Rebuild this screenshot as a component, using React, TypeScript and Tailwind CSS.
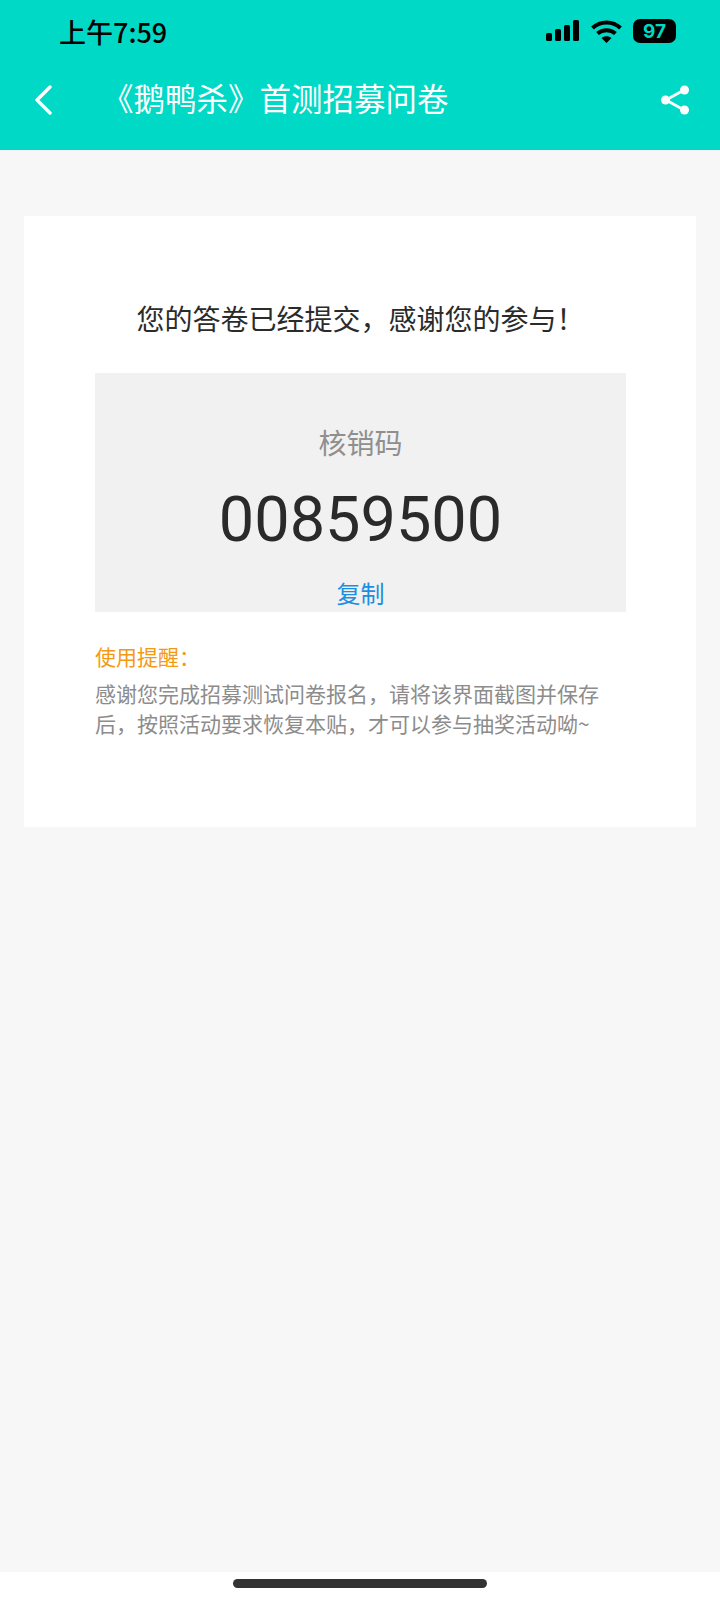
const cjk = "font-['Noto_Sans_CJK_SC','Noto_Sans',sans-serif]"

function StatusIcons() {
  return (
    <div className="flex items-center gap-[11px]">
      <svg width="34" height="22" viewBox="0 0 34 22" fill="#000">
        <rect x="0" y="13" width="6" height="8" rx="1.5" />
        <rect x="9" y="9" width="6" height="12" rx="1.5" />
        <rect x="18" y="5" width="6" height="16" rx="1.5" />
        <rect x="27" y="0" width="6" height="21" rx="1.5" />
      </svg>
      <svg width="31" height="23" viewBox="0 0 31 23" fill="none" stroke="#000" strokeWidth="4">
        <path d="M1.5 8C9.5 .5 21.5 .5 29.5 8" />
        <path d="M6.5 13.5C11.5 9 19.5 9 24.5 13.5" />
        <path d="M10.5 18 15.5 23 20.5 18C17.5 15.5 13.5 15.5 10.5 18Z" fill="#000" stroke="none" />
      </svg>
      <div className="relative flex h-[24px] w-[43px] items-center justify-center rounded-[7px] bg-black font-['Inter',sans-serif] text-[19px] leading-none font-bold text-[#00d9c6]">
        97
      </div>
    </div>
  )
}

function TopBar() {
  return (
    <header className="h-[150px] shrink-0 bg-[#00d9c6]">
      <div className="flex h-[62px] items-center justify-between pr-[44px] pl-[59px]">
        <span className={`${cjk} text-[27px] leading-none font-medium text-black`}>上午7:59</span>
        <StatusIcons />
      </div>
      <div className="flex h-[76px] items-center pr-[30px] pl-[34px]">
        <svg width="18" height="30" viewBox="0 0 18 30" fill="none" stroke="#fff" strokeWidth="3.4" strokeLinecap="round" strokeLinejoin="round" className="shrink-0">
          <path d="M16 2 3 15 16 28" />
        </svg>
        <h1 className={`${cjk} ml-[50px] flex-1 pb-[5px] text-[31.5px] leading-none font-normal text-white`}>《鹅鸭杀》首测招募问卷</h1>
        <svg width="30" height="30" viewBox="0 0 30 30" fill="#fff" stroke="#fff" className="shrink-0">
          <path d="M6 15 24 5M6 15 24 25" strokeWidth="2.6" fill="none" />
          <circle cx="5.5" cy="15" r="4.5" stroke="none" />
          <circle cx="24.5" cy="5" r="4.5" stroke="none" />
          <circle cx="24.5" cy="25" r="4.5" stroke="none" />
        </svg>
      </div>
    </header>
  )
}

export default function App() {
  return (
    <div className={`${cjk} flex h-[1600px] w-[720px] flex-col overflow-hidden bg-white`}>
      <TopBar />
      <main className="flex-1 bg-[#f7f7f7] px-[24px] pt-[66px]">
        <section className="h-[611px] bg-white pt-[82px] pr-[70px] pl-[71px]">
          <h2 className="text-center text-[28px] leading-[40px] font-normal text-[#2b2b2b]">您的答卷已经提交，感谢您的参与！</h2>
          <div className="mt-[35px] flex h-[239px] flex-col items-center bg-[#f1f1f1] pt-[51px]">
            <p className="text-[28px] leading-[36px] text-[#8f8f8f]">核销码</p>
            <p className="mt-[24px] font-['Roboto',sans-serif] text-[63px] leading-[72px] text-[#2a2a2a]">00859500</p>
            <button type="button" className="mt-[20px] text-[24px] leading-[34px] text-[#1c8fe3]">复制</button>
          </div>
          <p className="mt-[28px] text-[21px] leading-[32px] text-[#f39a12]">使用提醒：</p>
          <p className="mt-[6px] text-[21px] leading-[30px] text-[#8c8c8c]">
            感谢您完成招募测试问卷报名，请将该界面截图并保存后，按照活动要求恢复本贴，才可以参与抽奖活动呦~
          </p>
        </section>
      </main>
      <footer className="flex h-[28px] shrink-0 justify-center bg-white pt-[7px]">
        <div className="h-[9px] w-[254px] rounded-full bg-[#333]" />
      </footer>
    </div>
  )
}
